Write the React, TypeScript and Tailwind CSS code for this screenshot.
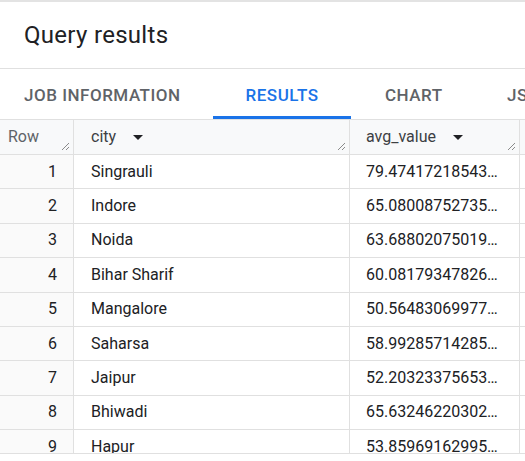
const rows = [
  { n: 1, city: 'Singrauli', avg: '79.47417218543…' },
  { n: 2, city: 'Indore', avg: '65.08008752735…' },
  { n: 3, city: 'Noida', avg: '63.68802075019…' },
  { n: 4, city: 'Bihar Sharif', avg: '60.08179347826…' },
  { n: 5, city: 'Mangalore', avg: '50.56483069977…' },
  { n: 6, city: 'Saharsa', avg: '58.99285714285…' },
  { n: 7, city: 'Jaipur', avg: '52.20323375653…' },
  { n: 8, city: 'Bhiwadi', avg: '65.63246220302…' },
  { n: 9, city: 'Hapur', avg: '53.85969162995…' },
]

function ResizeHandle() {
  return (
    <svg width="9" height="9" viewBox="0 0 9 9" className="absolute right-[3px] bottom-[3px]">
      <path d="M1 8L8 1M5 8L8 5" stroke="#8a8a8a" strokeWidth="1" />
    </svg>
  )
}

function SortArrow() {
  return (
    <svg width="10" height="5" viewBox="0 0 10 5" className="ml-[17px] mt-[1px]">
      <path d="M0 0H10L5 5Z" fill="#202124" />
    </svg>
  )
}

export default function App() {
  return (
    <div className="w-[525px] h-[461px] bg-white overflow-hidden border-t-2 border-[#e3e3e3] font-['Roboto',sans-serif]">
      {/* Title */}
      <div className="h-[67px] flex items-center px-6 border-b border-[#e0e0e0]">
        <h1 className="text-[24px] text-[#202124] tracking-[0.3px]">Query results</h1>
      </div>

      {/* Tabs */}
      <div className="h-[51px] flex border-b border-[#e0e0e0] text-[17px] font-medium tracking-[0.03em] whitespace-nowrap overflow-hidden">
        <div className="w-[213px] shrink-0 pl-6 flex items-center border-b-[3px] border-transparent pt-[6px] text-[#5f6368]">JOB INFORMATION</div>
        <div className="w-[138px] shrink-0 flex items-center justify-center border-b-[3px] border-[#1a73e8] pt-[6px] text-[#1a73e8]">RESULTS</div>
        <div className="w-[156px] shrink-0 pl-[34px] flex items-center border-b-[3px] border-transparent pt-[6px] text-[#5f6368]">CHART</div>
        <div className="w-[120px] shrink-0 flex items-center border-b-[3px] border-transparent pt-[6px] text-[#5f6368]">JSON</div>
      </div>

      {/* Table */}
      <div className="h-[334px] overflow-hidden border-b border-[#e0e0e0]">
        <div className="grid grid-cols-[74px_276px_170px_1fr] text-[16px]">
          <div className="relative h-[35px] bg-[#f8f9fa] border-r border-b border-[#e0e0e0] flex items-center pl-2 text-[#5f6368]">
            Row
            <ResizeHandle />
          </div>
          <div className="relative h-[35px] bg-[#f8f9fa] border-r border-b border-[#e0e0e0] flex items-center pl-[17px] text-[#3c4043]">
            city
            <SortArrow />
            <ResizeHandle />
          </div>
          <div className="relative h-[35px] bg-[#f8f9fa] border-r border-b border-[#e0e0e0] flex items-center pl-4 text-[#3c4043]">
            avg_value
            <SortArrow />
            <ResizeHandle />
          </div>
          <div className="h-[35px] bg-[#f8f9fa] border-b border-[#e0e0e0]" />

          {rows.map((r) => (
            <div key={r.n} className="contents">
              <div className="h-[34.4px] bg-[#fafafa] border-r border-b border-[#e0e0e0] flex items-center justify-end pr-4 text-[#202124]">
                {r.n}
              </div>
              <div className="h-[34.4px] border-r border-b border-[#e0e0e0] flex items-center pl-[17px] text-[#202124]">
                {r.city}
              </div>
              <div className="h-[34.4px] border-r border-b border-[#e0e0e0] flex items-center pl-4 text-[#202124] whitespace-nowrap">
                {r.avg}
              </div>
              <div className="h-[34.4px] border-b border-[#e0e0e0]" />
            </div>
          ))}
        </div>
      </div>
    </div>
  )
}
